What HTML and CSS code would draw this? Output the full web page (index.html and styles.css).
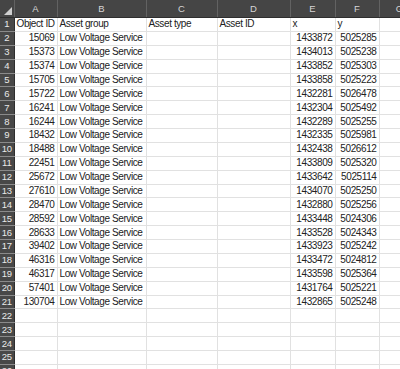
FILE: index.html
```html
<!DOCTYPE html>
<html>
<head>
<meta charset="utf-8">
<link rel="stylesheet" href="styles.css">
</head>
<body>
<table class="sheet">
<colgroup>
<col class="c-rh"><col class="c-a"><col class="c-b"><col class="c-c"><col class="c-d"><col class="c-e"><col class="c-f"><col class="c-g">
</colgroup>
<thead>
<tr class="colhead"><th class="corner"><span class="tri"></span></th><th>A</th><th>B</th><th>C</th><th>D</th><th>E</th><th>F</th><th>G</th></tr>
</thead>
<tbody>
<tr><th class="rh">1</th><td>Object ID</td><td>Asset group</td><td>Asset type</td><td>Asset ID</td><td>x</td><td>y</td><td></td></tr>
<tr><th class="rh">2</th><td class="num">15069</td><td>Low Voltage Service</td><td></td><td></td><td class="num">1433872</td><td class="num">5025285</td><td></td></tr>
<tr><th class="rh">3</th><td class="num">15373</td><td>Low Voltage Service</td><td></td><td></td><td class="num">1434013</td><td class="num">5025238</td><td></td></tr>
<tr><th class="rh">4</th><td class="num">15374</td><td>Low Voltage Service</td><td></td><td></td><td class="num">1433852</td><td class="num">5025303</td><td></td></tr>
<tr><th class="rh">5</th><td class="num">15705</td><td>Low Voltage Service</td><td></td><td></td><td class="num">1433858</td><td class="num">5025223</td><td></td></tr>
<tr><th class="rh">6</th><td class="num">15722</td><td>Low Voltage Service</td><td></td><td></td><td class="num">1432281</td><td class="num">5026478</td><td></td></tr>
<tr><th class="rh">7</th><td class="num">16241</td><td>Low Voltage Service</td><td></td><td></td><td class="num">1432304</td><td class="num">5025492</td><td></td></tr>
<tr><th class="rh">8</th><td class="num">16244</td><td>Low Voltage Service</td><td></td><td></td><td class="num">1432289</td><td class="num">5025255</td><td></td></tr>
<tr><th class="rh">9</th><td class="num">18432</td><td>Low Voltage Service</td><td></td><td></td><td class="num">1432335</td><td class="num">5025981</td><td></td></tr>
<tr><th class="rh">10</th><td class="num">18488</td><td>Low Voltage Service</td><td></td><td></td><td class="num">1432438</td><td class="num">5026612</td><td></td></tr>
<tr><th class="rh">11</th><td class="num">22451</td><td>Low Voltage Service</td><td></td><td></td><td class="num">1433809</td><td class="num">5025320</td><td></td></tr>
<tr><th class="rh">12</th><td class="num">25672</td><td>Low Voltage Service</td><td></td><td></td><td class="num">1433642</td><td class="num">5025114</td><td></td></tr>
<tr><th class="rh">13</th><td class="num">27610</td><td>Low Voltage Service</td><td></td><td></td><td class="num">1434070</td><td class="num">5025250</td><td></td></tr>
<tr><th class="rh">14</th><td class="num">28470</td><td>Low Voltage Service</td><td></td><td></td><td class="num">1432880</td><td class="num">5025256</td><td></td></tr>
<tr><th class="rh">15</th><td class="num">28592</td><td>Low Voltage Service</td><td></td><td></td><td class="num">1433448</td><td class="num">5024306</td><td></td></tr>
<tr><th class="rh">16</th><td class="num">28633</td><td>Low Voltage Service</td><td></td><td></td><td class="num">1433528</td><td class="num">5024343</td><td></td></tr>
<tr><th class="rh">17</th><td class="num">39402</td><td>Low Voltage Service</td><td></td><td></td><td class="num">1433923</td><td class="num">5025242</td><td></td></tr>
<tr><th class="rh">18</th><td class="num">46316</td><td>Low Voltage Service</td><td></td><td></td><td class="num">1433472</td><td class="num">5024812</td><td></td></tr>
<tr><th class="rh">19</th><td class="num">46317</td><td>Low Voltage Service</td><td></td><td></td><td class="num">1433598</td><td class="num">5025364</td><td></td></tr>
<tr><th class="rh">20</th><td class="num">57401</td><td>Low Voltage Service</td><td></td><td></td><td class="num">1431764</td><td class="num">5025221</td><td></td></tr>
<tr><th class="rh">21</th><td class="num">130704</td><td>Low Voltage Service</td><td></td><td></td><td class="num">1432865</td><td class="num">5025248</td><td></td></tr>
<tr><th class="rh">22</th><td></td><td></td><td></td><td></td><td></td><td></td><td></td></tr>
<tr><th class="rh">23</th><td></td><td></td><td></td><td></td><td></td><td></td><td></td></tr>
<tr><th class="rh">24</th><td></td><td></td><td></td><td></td><td></td><td></td><td></td></tr>
<tr><th class="rh">25</th><td></td><td></td><td></td><td></td><td></td><td></td><td></td></tr>
<tr><th class="rh">26</th><td></td><td></td><td></td><td></td><td></td><td></td><td></td></tr>
</tbody>
</table>
</body>
</html>
```
FILE: styles.css
```css
html, body {
  margin: 0;
  padding: 0;
  background: #ffffff;
  overflow: hidden;
  width: 400px;
  height: 369px;
}

.sheet {
  border-collapse: collapse;
  table-layout: fixed;
  width: 420px;
  font-family: "Liberation Sans", Arial, sans-serif;
  font-size: 10px;
  letter-spacing: -0.4px;
  color: #222222;
}

.c-rh { width: 14px; }
.c-a { width: 43px; }
.c-b { width: 89px; }
.c-c { width: 71px; }
.c-d { width: 73px; }
.c-e { width: 45px; }
.c-f { width: 44px; }
.c-g { width: 41px; }

.colhead th {
  height: 17px;
  padding: 0;
  background: #454545;
  color: #d6d6d6;
  font-weight: normal;
  font-size: 9.5px;
  letter-spacing: 0;
  text-align: center;
  border-right: 1px solid #626262;
  border-bottom: 1px solid #2e2e2e;
}

.corner {
  position: relative;
}

.tri {
  position: absolute;
  right: 2px;
  bottom: 2px;
  width: 0;
  height: 0;
  border-left: 8px solid transparent;
  border-bottom: 8px solid #cfcfcf;
}

tbody tr {
  height: 13.88px;
}

.rh {
  padding: 0;
  background: #484848;
  color: #e8e8e8;
  font-weight: normal;
  font-size: 9.5px;
  letter-spacing: -0.3px;
  text-align: center;
  border-bottom: 1px solid #8a8a8a;
  border-right: 1px solid #2e2e2e;
  line-height: 12px;
}

td {
  padding: 0 2px;
  border-right: 1px solid #e1e1e1;
  border-bottom: 1px solid #e1e1e1;
  white-space: nowrap;
  overflow: hidden;
  line-height: 12px;
  vertical-align: middle;
}

td.num {
  text-align: right;
}
```
